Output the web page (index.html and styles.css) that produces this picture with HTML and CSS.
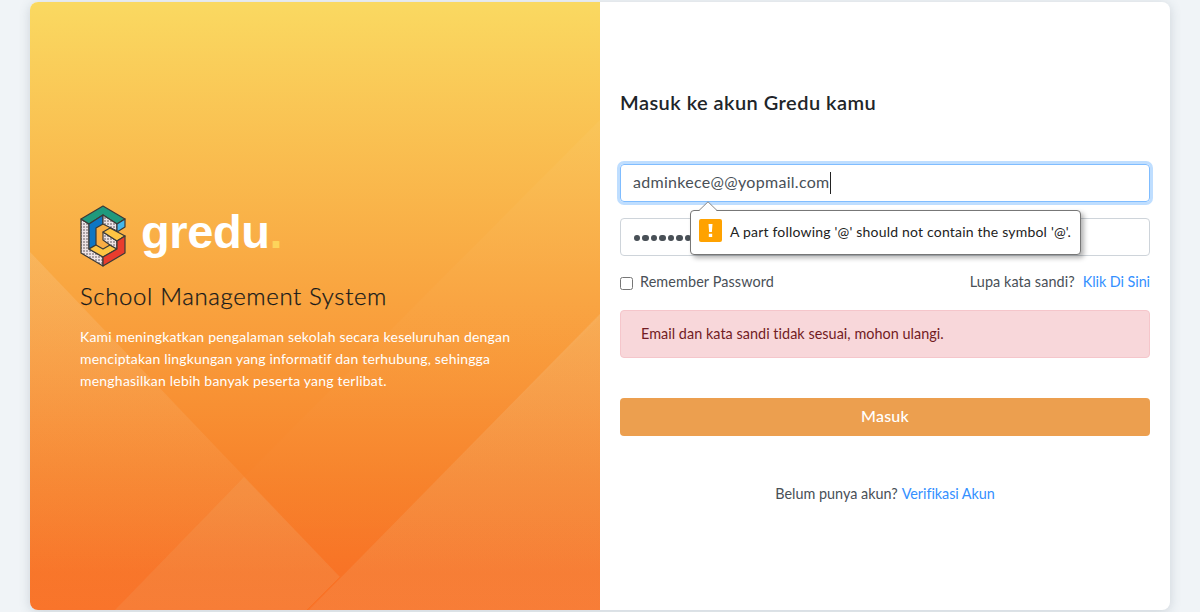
FILE: index.html
```html
<!DOCTYPE html>
<html lang="id">
<head>
<meta charset="utf-8">
<title>Gredu</title>
<link rel="stylesheet" href="styles.css">
</head>
<body>
<main class="card">
  <section class="brand">
    <svg class="brand-bg" viewBox="0 0 570 608" preserveAspectRatio="none" aria-hidden="true">
      <defs>
        <linearGradient id="base" x1="0" y1="0" x2="0" y2="1"><stop offset="0" stop-color="#fad961"/><stop offset=".5" stop-color="#f9a23e"/><stop offset=".78" stop-color="#f7832b"/><stop offset=".94" stop-color="#f87326"/><stop offset="1" stop-color="#f97329"/></linearGradient>
        <linearGradient id="left" x1="0" y1="0" x2="0" y2="1"><stop offset="0" stop-color="#f5ecdc" stop-opacity=".15"/><stop offset="1" stop-color="#f5ecdc" stop-opacity="0.01"/></linearGradient>
        <linearGradient id="mid" x1="0" y1="0" x2="0" y2="1"><stop offset="0" stop-color="#fff" stop-opacity=".035"/><stop offset="1" stop-color="#fff" stop-opacity="0"/></linearGradient>
        <linearGradient id="right" x1="0" y1="0" x2="0" y2="1"><stop offset="0" stop-color="#f0f0dc" stop-opacity=".15"/><stop offset="1" stop-color="#e8f0d8" stop-opacity=".08"/></linearGradient>
      </defs>
      <path fill="url(#base)" d="M0 0H570V608H0z"/>
      <path fill="url(#left)" d="M0 250L310 575L278 608H0z"/>
      <path fill="url(#mid)" d="M570 118V316L310 575L214 475z"/>
      <path fill="#e8f0d8" fill-opacity=".075" d="M214 475L310 575L277 608H85z"/>
      <path fill="url(#right)" d="M570 312V608H279z"/>
      <path stroke="#f97224" d="M310 575L277 608"/>
    </svg>
    <div class="brand-body">
      <div class="logo">
        <svg class="logo-mark" viewBox="0 0 46 62" aria-hidden="true">
          <defs><pattern id="dots" width="3" height="3" patternUnits="userSpaceOnUse"><path fill="#eee3e6" d="M0 0h3v3H0z"/><circle cx="1" cy="1" r=".75" fill="#453e42"/></pattern></defs>
          <g stroke="#3b3a38" stroke-width="1.2" stroke-linejoin="round">
            <path fill="url(#dots)" d="M1 14L9 19V44L23 52V61L1 48z"/>
            <path fill="#1f9a7d" d="M23 1L45 14L37 19L23 10L9 19L1 14z"/>
            <path fill="#0e76c4" d="M23 10V19L16 23V40L9 44V19z"/>
            <path fill="url(#dots)" d="M23 10L37 19V26L23 19z"/>
            <path fill="#45b6ea" d="M37 19L45 14V22L37 27z"/>
            <path fill="#fdc443" d="M16 40L23 44L30 40L37 44L23 52L9 44z"/>
            <path fill="url(#dots)" d="M23 27L37 36V44L30 40L23 35z"/>
            <path fill="#fdc443" d="M30 23L45 31L37 36L23 27z"/>
            <path fill="#e93c2d" d="M45 31V48L23 61V52L37 44V36z"/>
          </g>
        </svg>
        <span class="logo-name">gredu<span class="logo-dot">.</span></span>
      </div>
      <h1 class="tagline">School Management System</h1>
      <p class="intro">Kami meningkatkan pengalaman sekolah secara keseluruhan dengan<br><span class="intro-tight">menciptakan lingkungan yang informatif dan terhubung, sehingga</span><br>menghasilkan lebih banyak peserta yang terlibat.</p>
    </div>
  </section>
  <section class="login">
    <h2 class="title">Masuk ke akun Gredu kamu</h2>
    <div class="field field-focus"><span class="value">adminkece@@yopmail.com</span><i class="caret"></i>
      <div class="tooltip">
        <svg class="tip-arrow" viewBox="0 0 18 10" aria-hidden="true"><path fill="#fff" d="M0 10L9 1L18 10z"/><path fill="none" stroke="#888" d="M0 9.500L9 .8L18 9.500"/></svg>
        <svg class="tip-icon" viewBox="0 0 23 23" aria-hidden="true"><rect width="23" height="23" rx="2" fill="#ffa200"/><path fill="#fff" d="M9.500 5h4l-.6 8h-2.800zM9.800 14.700h3.400V18H9.800z"/></svg>
        <span class="tip-text">A part following '@' should not contain the symbol '@'.</span>
      </div>
    </div>
    <div class="field password"><i></i><i></i><i></i><i></i><i></i><i></i><i></i><i></i></div>
    <div class="options">
      <label class="remember"><input type="checkbox" class="check">Remember Password</label>
      <span class="forgot">Lupa kata sandi?<a class="link">Klik Di Sini</a></span>
    </div>
    <div class="alert">Email dan kata sandi tidak sesuai, mohon ulangi.</div>
    <button class="submit">Masuk</button>
    <p class="signup">Belum punya akun?<a class="link">Verifikasi Akun</a></p>
  </section>
</main>
</body>
</html>
```
FILE: styles.css
```css
* { box-sizing: border-box; }
body { margin: 0; height: 612px; overflow: hidden; padding: 2px 30px; background: #f0f4f7; font: 14.4px/22px Lato, "Noto Sans", sans-serif; color: #495057; }
h1, h2, p { margin: 0; font-weight: 400; }
.card { display: flex; height: 608px; border-radius: 8px; background: #fff; box-shadow: 0 2px 12px rgba(60, 80, 100, .2); }
.brand { position: relative; width: 570px; overflow: hidden; border-radius: 8px 0 0 8px; }
.brand-bg { position: absolute; inset: 0; width: 570px; height: 608px; }
.brand-body { position: relative; padding: 203px 50px 0; white-space: nowrap; }
.logo { display: flex; gap: 15px; height: 62px; }
.logo-mark { width: 46px; height: 62px; }
.logo-name { font: bold 47px/54px "Liberation Sans", Arial, sans-serif; letter-spacing: -.4px; color: #fff; }
.logo-dot { color: #fdd45b; }
.tagline { margin-top: 14px; font-size: 24px; line-height: 29px; font-weight: 300; letter-spacing: .62px; color: #15181a; -webkit-text-stroke: .25px #15181a; }
.intro { margin-top: 16px; font-size: 14px; letter-spacing: .216px; color: #fff; }
.intro-tight { letter-spacing: .182px; }
.login { width: 570px; padding: 88px 20px 0; white-space: nowrap; }
.title { font-size: 20px; line-height: 24px; font-weight: 600; letter-spacing: .46px; color: #212529; }
.field { display: flex; align-items: center; height: 38px; padding: 0 12px; border: 1px solid #ced4da; border-radius: 4px; }
.field-focus { position: relative; margin-top: 50px; border-color: #80bdff; box-shadow: 0 0 0 3px #bfdeff; font-size: 16px; }
.value { margin-top: -2px; letter-spacing: .3px; }
.caret { width: 1px; height: 22px; background: #222; }
.tooltip { position: absolute; z-index: 2; left: 69px; top: 45px; display: flex; align-items: center; gap: 8px; width: 391px; height: 45px; padding: 0 8px; border: 1px solid #777; border-radius: 4px; background: #fff; box-shadow: 3px 3px 5px rgba(0, 0, 0, .3); font-size: 14px; color: #222; }
.tip-arrow { position: absolute; left: 8px; top: -10px; width: 18px; height: 10px; }
.tip-icon { width: 23px; height: 23px; margin-top: -4px; }
.tip-text { margin-top: -1px; letter-spacing: .197px; }
.password { gap: 2.300px; margin-top: 16px; padding-left: 13px; }
.password i { width: 6.200px; height: 6.500px; border-radius: 50%; background: #495057; margin-top: 2px; }
.options { display: flex; justify-content: space-between; margin-top: 15px; }
.remember { display: flex; align-items: center; letter-spacing: .111px; }
.check { width: 13px; height: 13px; margin: 3px 7px 0 0; }
.forgot { display: flex; gap: 8px; letter-spacing: .085px; }
.link { letter-spacing: -.06px; color: #3490ff; }
.alert { height: 48px; margin-top: 17px; padding: 12px 20px; border: 1px solid #f5c6cb; border-radius: 4px; background: #f8d7da; color: #721c24; letter-spacing: .04px; }
.submit { display: block; width: 530px; height: 38px; margin-top: 40px; padding: 0 0 2px; border: 0; border-radius: 4px; background: #ec9f4f; color: #fff; font: 500 16px/24px Lato, sans-serif; letter-spacing: .237px; }
.signup { display: flex; justify-content: center; gap: 4px; margin-top: 47px; }
```
